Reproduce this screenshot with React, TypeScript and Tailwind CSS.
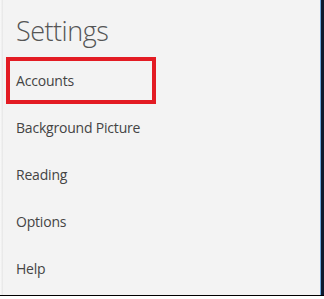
export default function App() {
  const items = ["Accounts", "Background Picture", "Reading", "Options", "Help"];

  return (
    <div className="w-[324px] h-[299px] bg-white">
      <div className="flex h-[296px] border-b border-black">
        <div className="w-[3px] bg-gradient-to-r from-[#fafafa] to-[#e6e6e6]" />
        <div className="flex-1 bg-[#f3f3f3] pt-[13px] font-['Open_Sans',sans-serif] text-[#444]">
          <h1 className="pl-[13px] text-[27px] font-light leading-[36px] tracking-[-0.5px] text-[#555]">
            Settings
          </h1>
          <div className="mt-[8px] flex flex-col">
            {items.map((item, i) => (
              <div
                key={item}
                className={`ml-[3px] flex h-[47px] w-[150px] items-center text-[14px] tracking-[-0.2px] ${
                  i === 0 ? "border-[4px] border-[#e31b23] pl-[6px]" : "pl-[10px]"
                }`}
              >
                {item}
              </div>
            ))}
          </div>
        </div>
        <div className="w-[1px] bg-[#6fa8dc]" />
        <div className="w-[3px] bg-[#0b1a2e]" />
      </div>
    </div>
  );
}
